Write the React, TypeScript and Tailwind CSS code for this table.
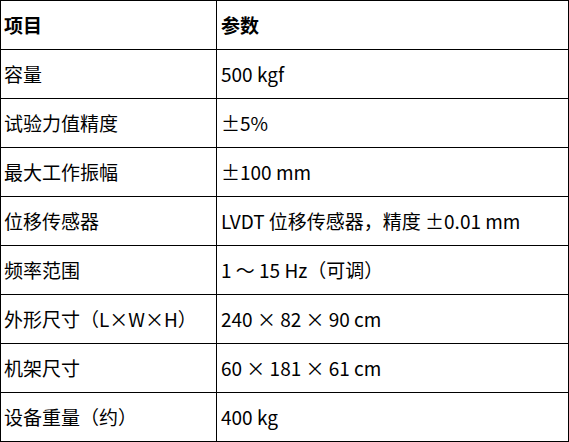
const rows: [string, string][] = [
  ["容量", "500 kgf"],
  ["试验力值精度", "±5%"],
  ["最大工作振幅", "±100 mm"],
  ["位移传感器", "LVDT 位移传感器，精度 ±0.01 mm"],
  ["频率范围", "1 ～ 15 Hz（可调）"],
  ["外形尺寸（L×W×H）", "240 × 82 × 90 cm"],
  ["机架尺寸", "60 × 181 × 61 cm"],
  ["设备重量（约）", "400 kg"],
];

function Row({ a, b, head }: { a: string; b: string; head?: boolean }) {
  return (
    <div className={`flex h-[49px] ${head ? "font-bold" : ""}`}>
      <div className="flex w-[216px] items-center border-r border-b border-black pl-[3px]">{a}</div>
      <div className="flex w-[352px] items-center border-r border-b border-black pl-[4px]">{b}</div>
    </div>
  );
}

export default function App() {
  return (
    <div
      className="w-[569px] bg-white text-[19px] text-black"
      style={{ fontFamily: '"Noto Sans CJK SC", "Noto Sans", sans-serif' }}
    >
      <div className="border-t border-l border-black">
        <Row a="项目" b="参数" head />
        {rows.map(([a, b]) => (
          <Row key={a} a={a} b={b} />
        ))}
      </div>
    </div>
  );
}
